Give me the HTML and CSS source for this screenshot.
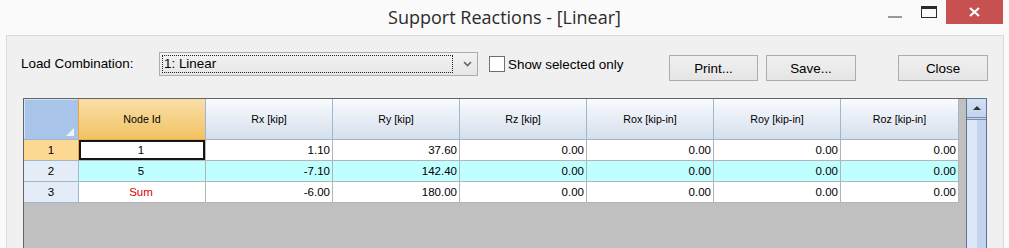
FILE: index.html
```html
<!DOCTYPE html>
<html lang="en">

<head>
    <meta charset="UTF-8">
    <title>Support Reactions - [Linear]</title>
    <link rel="stylesheet" href="styles.css">
</head>

<body>
    <div class="titlebar">
        <div class="title">Support Reactions - [Linear]</div>
        <div class="caption">
            <span class="cap-min"></span>
            <span class="cap-max"></span>
            <span class="cap-close">
                <svg width="11" height="10" viewBox="0 0 11 10">
                    <path d="M1 1 L10 9 M10 1 L1 9" stroke="#fff" stroke-width="2.2" fill="none"/>
                </svg>
            </span>
        </div>
    </div>

    <div class="client">
        <!-- top controls -->
        <div class="toolbar">
            <label class="combo-label">Load Combination:</label>
            <div class="combo">
                <div class="combo-focus">1: Linear</div>
                <svg class="combo-arrow" width="9" height="6" viewBox="0 0 9 6">
                    <path d="M1 1 L4.5 4.5 L8 1" stroke="#666" stroke-width="1.6" fill="none"/>
                </svg>
            </div>
            <label class="check"><span class="check-box"></span>Show selected only</label>
            <div class="buttons">
                <button class="btn">Print...</button>
                <button class="btn save">Save...</button>
                <button class="btn close">Close</button>
            </div>
        </div>

        <!-- reactions grid -->
        <div class="grid">
            <div class="grid-body">
                <div class="table">
                    <div class="hd corner"><span class="grip"></span></div>
                    <div class="hd key">Node Id</div>
                    <div class="hd">Rx [kip]</div>
                    <div class="hd">Ry [kip]</div>
                    <div class="hd">Rz [kip]</div>
                    <div class="hd">Rox [kip-in]</div>
                    <div class="hd">Roy [kip-in]</div>
                    <div class="hd">Roz [kip-in]</div>

                    <div class="rh active">1</div>
                    <div class="cell center sel">1</div>
                    <div class="cell">1.10</div>
                    <div class="cell">37.60</div>
                    <div class="cell">0.00</div>
                    <div class="cell">0.00</div>
                    <div class="cell">0.00</div>
                    <div class="cell">0.00</div>

                    <div class="rh">2</div>
                    <div class="cell center alt">5</div>
                    <div class="cell alt">-7.10</div>
                    <div class="cell alt">142.40</div>
                    <div class="cell alt">0.00</div>
                    <div class="cell alt">0.00</div>
                    <div class="cell alt">0.00</div>
                    <div class="cell alt">0.00</div>

                    <div class="rh">3</div>
                    <div class="cell center sum">Sum</div>
                    <div class="cell">-6.00</div>
                    <div class="cell">180.00</div>
                    <div class="cell">0.00</div>
                    <div class="cell">0.00</div>
                    <div class="cell">0.00</div>
                    <div class="cell">0.00</div>
                </div>
            </div>
            <div class="scrollbar">
                <div class="sb-up"><span class="sb-arrow"></span></div>
                <div class="sb-track"></div>
            </div>
        </div>
    </div>
</body>

</html>
```

FILE: styles.css
```css
body {
    margin: 0;
    width: 1009px;
    height: 248px;
    overflow: hidden;
    background: #fafafa;
    font-family: "Liberation Sans", Arial, sans-serif;
    color: #000;
}

/* title bar */
.titlebar {
    display: grid;
    grid-template-columns: 1fr auto 1fr;
    height: 35px;
}

.title {
    grid-column: 2;
    font: 18px "Open Sans", sans-serif;
    line-height: 34px;
    color: #2b2b2b;
}

.caption {
    grid-column: 3;
    justify-self: end;
    display: flex;
    align-items: flex-start;
    margin-right: 6px;
}

.cap-min {
    width: 14px;
    height: 2px;
    margin-top: 16px;
    background: #999;
}

.cap-max {
    width: 16px;
    height: 12px;
    box-sizing: border-box;
    margin: 6px 0 0 19px;
    border: 1px solid #2b2b2b;
    border-top-width: 3px;
}

.cap-close {
    width: 57px;
    height: 24px;
    margin-left: 9px;
    background: #c75050;
    display: flex;
    align-items: center;
    justify-content: center;
}

/* dialog body */
.client {
    margin: 0 5px 0 6px;
    height: 213px;
    border: 1px solid #dadada;
    border-bottom: none;
    background: #f0f0f0;
}

.toolbar {
    display: flex;
    align-items: flex-start;
    height: 62px;
    padding-left: 14px;
    font-size: 13.4px;
}

.combo-label {
    width: 138px;
    margin-top: 16px;
    line-height: 24px;
}

.combo {
    width: 319px;
    height: 24px;
    margin-top: 16px;
    box-sizing: border-box;
    border: 1px solid #acacac;
    background: linear-gradient(#f2f2f2, #e6e6e6);
    display: flex;
    align-items: center;
}

.combo-focus {
    width: 291px;
    height: 18px;
    margin-left: 2px;
    box-sizing: border-box;
    border: 1px dotted #222;
    padding-left: 1px;
    line-height: 16px;
}

.combo-arrow {
    margin-left: 10px;
}

.check {
    display: flex;
    align-items: center;
    height: 24px;
    margin: 16px 0 0 11px;
}

.check-box {
    width: 16px;
    height: 16px;
    box-sizing: border-box;
    border: 1px solid #707070;
    background: #fff;
    margin-right: 3px;
}

.buttons {
    display: flex;
    margin: 19px 15px 0 auto;
}

.btn {
    width: 89px;
    height: 26px;
    border: 1px solid #acacac;
    background: linear-gradient(#f0f0f0, #e5e5e5);
    font: inherit;
    color: #000;
    padding: 0;
}

.btn.save {
    width: 90px;
    margin-left: 8px;
}

.btn.close {
    width: 90px;
    margin-left: 42px;
}

/* grid */
.grid {
    display: flex;
    margin: 0 16px;
    height: 160px;
}

.grid-body {
    flex: 1;
    border-top: 1px solid #646464;
    border-left: 1px solid #646464;
    background: #c0c0c0;
}

.table {
    display: grid;
    grid-template-columns: 55px repeat(6, 127px) 118px;
    grid-template-rows: 41px repeat(3, 21px);
    font-size: 11.5px;
}

.hd {
    box-sizing: border-box;
    border-right: 1px solid #9eb6ce;
    border-bottom: 1px solid #9eb6ce;
    background: linear-gradient(#f9fbfe, #d5dfec);
    display: flex;
    align-items: center;
    justify-content: center;
    font-size: 10.7px;
}

.hd.corner {
    position: relative;
    background: #a9c4e9;
    border-right-color: #f0a33c;
    box-shadow: inset 1px 1px 0 #d6e3f5;
}

.grip {
    position: absolute;
    right: 4px;
    bottom: 3px;
    width: 0;
    height: 0;
    border-left: 8px solid transparent;
    border-bottom: 8px solid #eef3fa;
}

.hd.key {
    background: linear-gradient(#f9dfa8, #f1c262);
    border-bottom-color: #e8aa45;
}

.rh {
    box-sizing: border-box;
    border-right: 1px solid #9eb6ce;
    border-bottom: 1px solid #9eb6ce;
    background: #e4ecf7;
    text-align: center;
    line-height: 20px;
}

.rh.active {
    background: #fdd893;
    border-right-color: #f0a33c;
}

.cell {
    box-sizing: border-box;
    border-right: 1px solid #b4b4b4;
    border-bottom: 1px solid #b4b4b4;
    background: #fff;
    text-align: right;
    padding-right: 2px;
    line-height: 20px;
}

.cell.center {
    text-align: center;
}

.cell.alt {
    background: #bfffff;
}

.cell.sel {
    box-shadow: inset 0 0 0 2px #151515;
}

.cell.sum {
    color: #e00000;
}

/* vertical scrollbar */
.scrollbar {
    width: 21px;
    box-sizing: border-box;
    border: 1px solid #5f7393;
    background: #c3d4ee;
}

.sb-up {
    height: 19px;
    border-bottom: 1px solid #7a8dac;
    background: linear-gradient(#d3e0f3, #c3d4ee);
    display: flex;
    justify-content: center;
    padding-top: 7px;
    box-sizing: border-box;
}

.sb-arrow {
    width: 0;
    height: 0;
    border-left: 4px solid transparent;
    border-right: 4px solid transparent;
    border-bottom: 4px solid #333;
}

.sb-track {
    margin-top: 1px;
    height: 140px;
    border-top: 1px solid #7a8dac;
    background: linear-gradient(to right, #dce8f8 0, #dce8f8 55%, #c3d4ee 55%);
}
```
